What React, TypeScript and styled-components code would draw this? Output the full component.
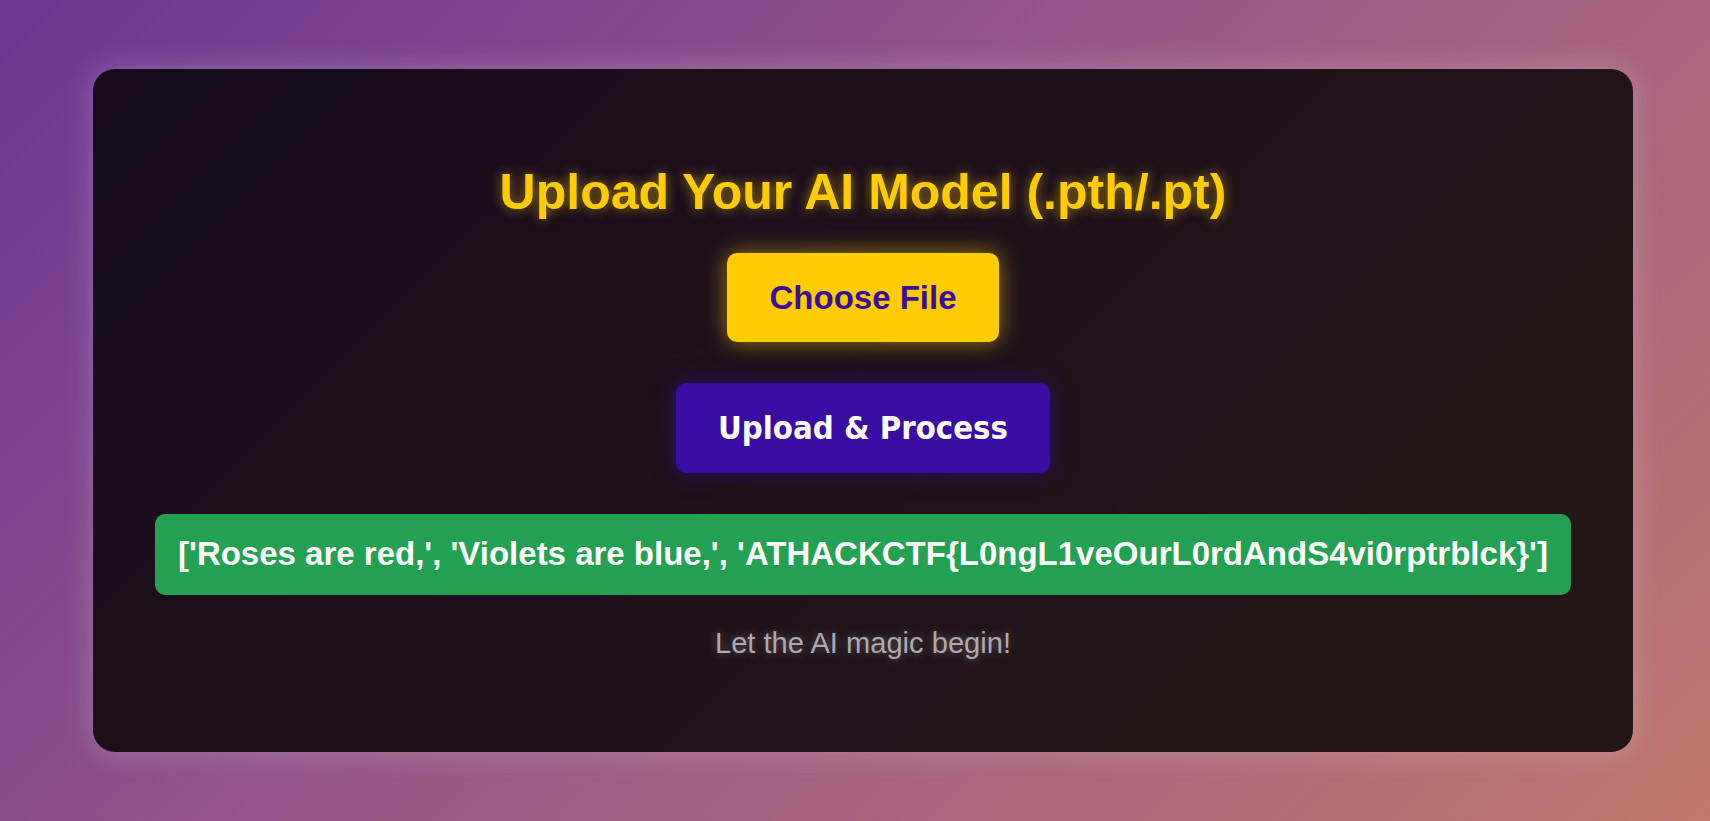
import React from "react";
import styled, { createGlobalStyle } from "styled-components";

const GlobalStyle = createGlobalStyle`
  html, body {
    margin: 0;
    padding: 0;
  }
  body {
    font-family: "Liberation Sans", Arial, sans-serif;
    background: linear-gradient(135deg, #6b3591 0%, #9a5a88 50%, #c0786c 100%);
    min-height: 100vh;
  }
  * { box-sizing: border-box; }
`;

const Page = styled.div`
  min-height: 100vh;
  display: flex;
  align-items: center;
  justify-content: center;
  padding-left: 16px;
`;

const Card = styled.div`
  width: 1540px;
  height: 683px;
  background: rgba(0, 0, 0, 0.8);
  border-radius: 22px;
  box-shadow: 0 0 30px rgba(255, 255, 255, 0.22);
  padding: 95px 62px 0;
  display: flex;
  flex-direction: column;
  align-items: center;
`;

const Title = styled.h1`
  margin: 0;
  font-family: "Liberation Sans", Arial, sans-serif;
  font-weight: 700;
  font-size: 50px;
  line-height: 57px;
  color: #ffcc00;
  text-shadow: 0 0 12px rgba(255, 204, 0, 0.55);
`;

const Button = styled.button<{ $variant: "file" | "submit" }>`
  border: none;
  cursor: pointer;
  height: ${(p) => (p.$variant === "file" ? "89px" : "90px")};
  padding: 0 42px;
  border-radius: 10px;
  display: inline-flex;
  align-items: center;
  justify-content: center;
  font-weight: 700;
  margin-top: ${(p) => (p.$variant === "file" ? "32px" : "41px")};
  background: ${(p) => (p.$variant === "file" ? "#ffcc00" : "#3a0ca3")};
  color: ${(p) => (p.$variant === "file" ? "#3a0ca3" : "#ffffff")};
  box-shadow: ${(p) =>
    p.$variant === "file"
      ? "0 0 22px rgba(255, 204, 0, 0.55)"
      : "0 0 22px rgba(58, 12, 163, 0.55)"};
  font-family: ${(p) =>
    p.$variant === "file"
      ? `"Liberation Sans", Arial, sans-serif`
      : `"DejaVu Sans Condensed", "DejaVu Sans", sans-serif`};
  font-stretch: ${(p) => (p.$variant === "file" ? "normal" : "condensed")};
  font-size: ${(p) => (p.$variant === "file" ? "33px" : "32.6px")};
  line-height: 38px;
`;

const Result = styled.div`
  width: 100%;
  margin-top: 41px;
  background: #22a152;
  border-radius: 10px;
  padding: 21px 20px 22px;
  text-align: center;
  color: #ffffff;
  font-family: "Liberation Sans", Arial, sans-serif;
  font-weight: 700;
  font-size: 33px;
  line-height: 38px;
  white-space: nowrap;
`;

const Tagline = styled.p`
  margin: 32px 0 0;
  font-family: "Liberation Sans", Arial, sans-serif;
  font-size: 29.1px;
  line-height: 33px;
  color: #aca9b2;
  text-shadow: 0 0 10px rgba(255, 255, 255, 0.3);
`;

export default function App() {
  return (
    <>
      <GlobalStyle />
      <Page>
        <Card>
          <Title>Upload Your AI Model (.pth/.pt)</Title>
          <Button $variant="file">Choose File</Button>
          <Button $variant="submit">Upload &amp; Process</Button>
          <Result>
            ['Roses are red,', 'Violets are blue,', 'ATHACKCTF{"{"}L0ngL1veOurL0rdAndS4vi0rptrblck{"}"}']
          </Result>
          <Tagline>Let the AI magic begin!</Tagline>
        </Card>
      </Page>
    </>
  );
}
